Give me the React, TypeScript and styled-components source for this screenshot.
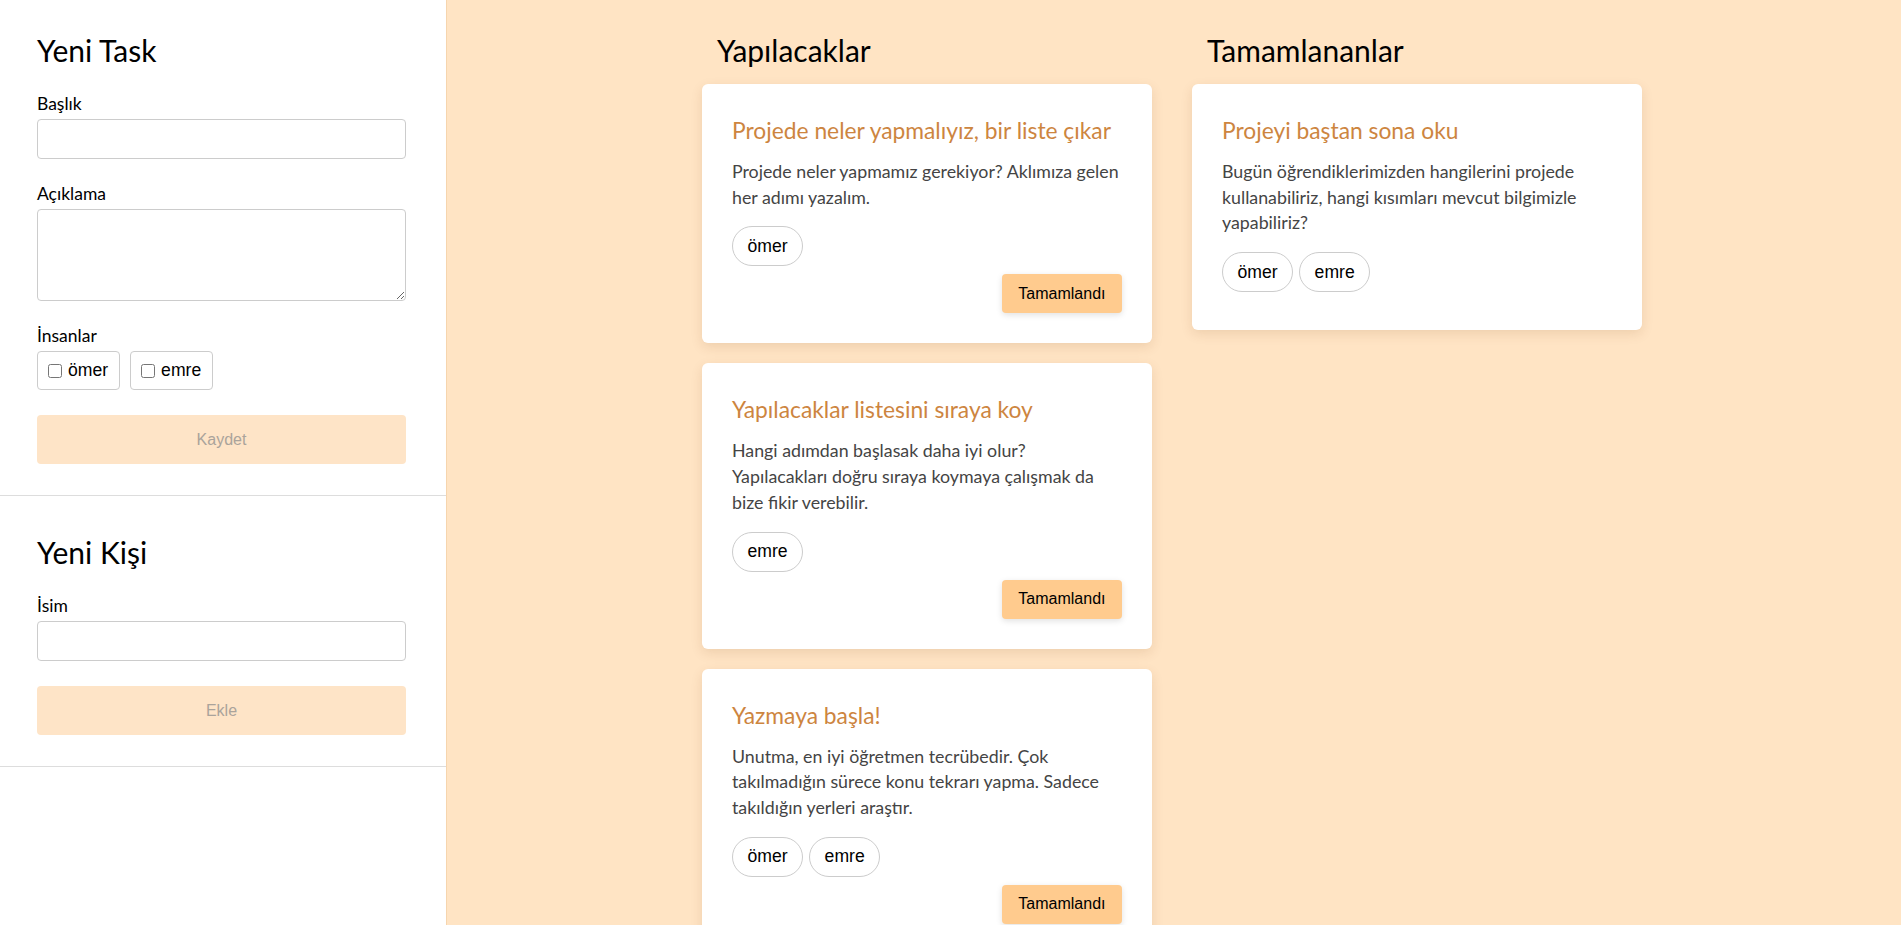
import React from "react";
import styled, { createGlobalStyle } from "styled-components";

const GlobalStyle = createGlobalStyle`
  html, body { margin: 0; padding: 0; }
  body {
    font-family: Lato, "Noto Sans", sans-serif;
    background: bisque;
    color: #000;
  }
  *, *::before, *::after { box-sizing: border-box; }
  ::-webkit-scrollbar { width: 5px; height: 5px; }
  ::-webkit-scrollbar-track { background: #f0f0f0; }
  ::-webkit-scrollbar-thumb {
    background: #c1c1c1;
    border-left: 1px solid #f0f0f0;
    background-clip: padding-box;
  }
`;

const Page = styled.div`
  display: flex;
  align-items: stretch;
  min-height: 100vh;
`;

const Sidebar = styled.aside`
  flex: 0 0 447px;
  width: 447px;
  background: #fff;
  border-right: 1px solid #f6d5ae;
`;

const Section = styled.section<{ $top: number }>`
  display: flex;
  flex-direction: column;
  padding: ${(p) => p.$top}px 40px 31px 37px;
  border-bottom: 1px solid #dddddd;
`;

const Heading = styled.h2`
  margin: 0 0 22px;
  font-size: 30px;
  line-height: 40px;
  font-weight: 400;
`;

const Field = styled.div`
  display: flex;
  flex-direction: column;
  & + & {
    margin-top: 23px;
  }
`;

const Label = styled.label`
  font-size: 17.5px;
  line-height: 24px;
  margin-bottom: 3px;
`;

const TextInput = styled.input`
  width: 100%;
  height: 40px;
  border: 1px solid #cccccc;
  border-radius: 4px;
  background: #fff;
`;

const TextArea = styled.textarea`
  width: 100%;
  height: 92px;
  border: 1px solid #cccccc;
  border-radius: 4px;
  background: #fff;
`;

const CheckRow = styled.div`
  display: flex;
  gap: 10px;
`;

const CheckOption = styled.label`
  display: inline-flex;
  align-items: center;
  height: 39px;
  padding: 0 11px 0 10px;
  border: 1px solid #cccccc;
  border-radius: 4px;
  font-family: "Liberation Sans", Arial, sans-serif;
  font-size: 17.6px;

  input {
    width: 14px;
    height: 14px;
    margin: 0 6px 0 0;
  }
`;

const WideButton = styled.button`
  margin-top: 25px;
  width: 100%;
  height: 49px;
  border: none;
  border-radius: 4px;
  background: #fee4c7;
  color: #aaa39b;
  font-family: "Liberation Sans", Arial, sans-serif;
  font-size: 16px;
`;

const Main = styled.main`
  flex: 1;
  display: flex;
  justify-content: center;
  align-items: flex-start;
  gap: 40px;
  padding: 30px 4px 40px 0;
`;

const Column = styled.div`
  width: 450px;
  display: flex;
  flex-direction: column;
`;

const ColumnTitle = styled.h2`
  margin: 0 0 14px;
  padding-left: 15px;
  font-size: 30px;
  line-height: 40px;
  font-weight: 400;
`;

const CardList = styled.div`
  display: flex;
  flex-direction: column;
  gap: 20px;
`;

const Card = styled.article`
  display: flex;
  flex-direction: column;
  background: #fff;
  border-radius: 6px;
  padding: 30px;
  box-shadow: 0 4px 12px rgba(120, 70, 20, 0.13);
`;

const CardTitle = styled.h3`
  margin: 0;
  font-size: 22.8px;
  line-height: 32px;
  font-weight: 400;
  color: peru;
`;

const CardText = styled.p`
  margin: 13px 0 16px;
  font-size: 17.8px;
  line-height: 25.7px;
  color: #444;
`;

const Chips = styled.div`
  display: flex;
  gap: 6px;
  margin-bottom: 8px;
`;

const Chip = styled.span`
  display: inline-flex;
  align-items: center;
  height: 40px;
  padding: 0 14.5px;
  border: 1px solid #cccccc;
  border-radius: 20px;
  font-family: "Liberation Sans", Arial, sans-serif;
  font-size: 17.6px;
  color: #000;
`;

const DoneButton = styled.button`
  align-self: flex-end;
  height: 39px;
  padding: 0 16.5px;
  border: none;
  border-radius: 4px;
  background: #ffcb8e;
  color: #000;
  font-family: "Liberation Sans", Arial, sans-serif;
  font-size: 16px;
  box-shadow: 0 2px 6px rgba(0, 0, 0, 0.12);
`;

type Task = { title: string; text: string; people: string[] };

const todo: Task[] = [
  {
    title: "Projede neler yapmalıyız, bir liste çıkar",
    text: "Projede neler yapmamız gerekiyor? Aklımıza gelen her adımı yazalım.",
    people: ["ömer"],
  },
  {
    title: "Yapılacaklar listesini sıraya koy",
    text: "Hangi adımdan başlasak daha iyi olur? Yapılacakları doğru sıraya koymaya çalışmak da bize fikir verebilir.",
    people: ["emre"],
  },
  {
    title: "Yazmaya başla!",
    text: "Unutma, en iyi öğretmen tecrübedir. Çok takılmadığın sürece konu tekrarı yapma. Sadece takıldığın yerleri araştır.",
    people: ["ömer", "emre"],
  },
];

const done: Task[] = [
  {
    title: "Projeyi baştan sona oku",
    text: "Bugün öğrendiklerimizden hangilerini projede kullanabiliriz, hangi kısımları mevcut bilgimizle yapabiliriz?",
    people: ["ömer", "emre"],
  },
];

function TaskCard({ task, showButton }: { task: Task; showButton: boolean }) {
  return (
    <Card>
      <CardTitle>{task.title}</CardTitle>
      <CardText>{task.text}</CardText>
      <Chips>
        {task.people.map((p) => (
          <Chip key={p}>{p}</Chip>
        ))}
      </Chips>
      {showButton && <DoneButton>Tamamlandı</DoneButton>}
    </Card>
  );
}

export default function App() {
  return (
    <>
      <GlobalStyle />
      <Page>
        <Sidebar>
          <Section $top={30}>
            <Heading>Yeni Task</Heading>
            <Field>
              <Label htmlFor="title">Başlık</Label>
              <TextInput id="title" type="text" />
            </Field>
            <Field>
              <Label htmlFor="desc">Açıklama</Label>
              <TextArea id="desc" />
            </Field>
            <Field>
              <Label as="div">İnsanlar</Label>
              <CheckRow>
                <CheckOption>
                  <input type="checkbox" />
                  ömer
                </CheckOption>
                <CheckOption>
                  <input type="checkbox" />
                  emre
                </CheckOption>
              </CheckRow>
            </Field>
            <WideButton disabled>Kaydet</WideButton>
          </Section>
          <Section $top={36}>
            <Heading>Yeni Kişi</Heading>
            <Field>
              <Label htmlFor="name">İsim</Label>
              <TextInput id="name" type="text" />
            </Field>
            <WideButton disabled>Ekle</WideButton>
          </Section>
        </Sidebar>
        <Main>
          <Column>
            <ColumnTitle>Yapılacaklar</ColumnTitle>
            <CardList>
              {todo.map((t) => (
                <TaskCard key={t.title} task={t} showButton />
              ))}
            </CardList>
          </Column>
          <Column>
            <ColumnTitle>Tamamlananlar</ColumnTitle>
            <CardList>
              {done.map((t) => (
                <TaskCard key={t.title} task={t} showButton={false} />
              ))}
            </CardList>
          </Column>
        </Main>
      </Page>
    </>
  );
}
